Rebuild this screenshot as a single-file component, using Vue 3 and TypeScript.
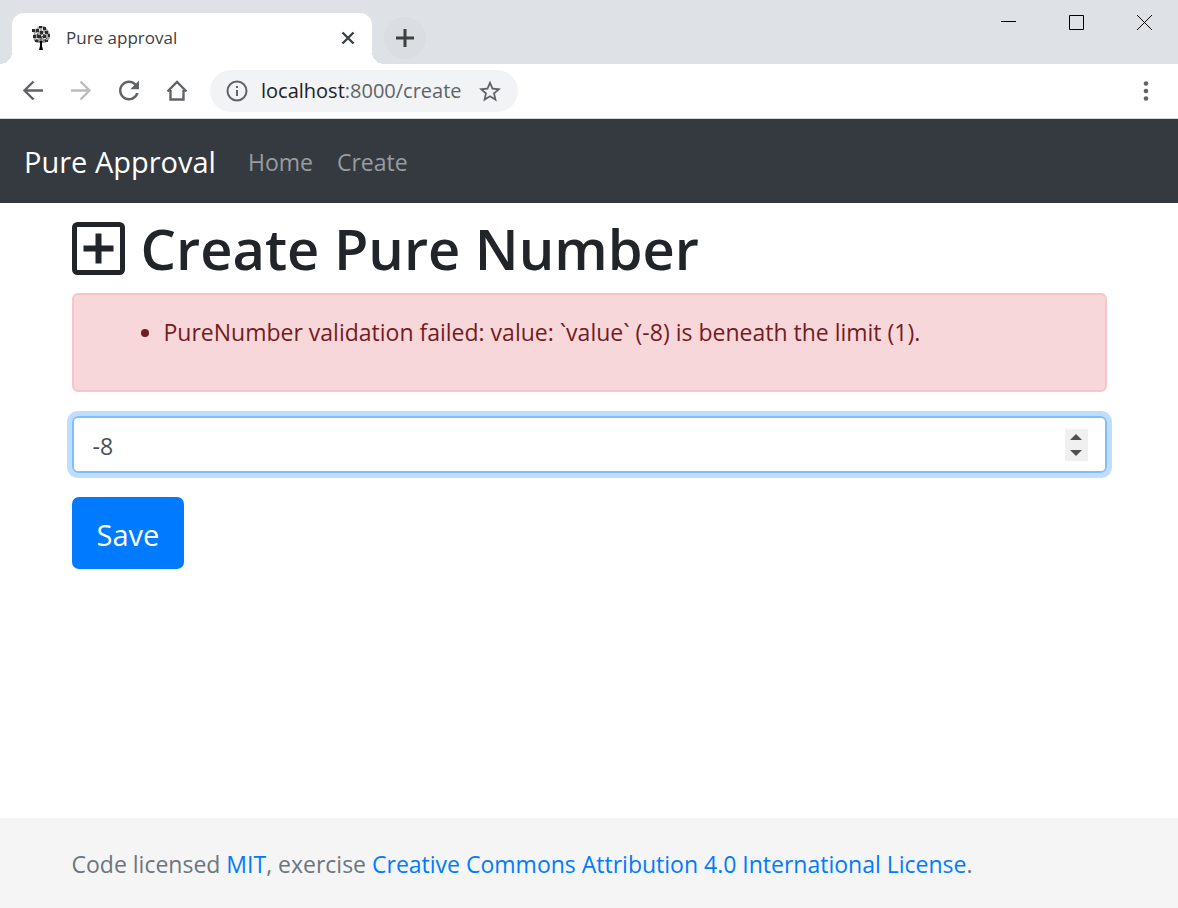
<script setup lang="ts">
import { ref } from 'vue'

interface NavLink {
  label: string
  href: string
}

const navLinks: NavLink[] = [
  { label: 'Home', href: '#home' },
  { label: 'Create', href: '#create' },
]

const errors = ref<string[]>([
  'PureNumber validation failed: value: `value` (-8) is beneath the limit (1).',
])

const amount = ref<number>(-8)
</script>

<template>
  <div class="window">
    <div class="titlebar">
      <div class="tab">
        <svg class="favicon" viewBox="0 0 20 26" aria-hidden="true">
          <path class="leaf-light" d="M8 1h5l2 2 2 2 2 4v4l-2 3-3 2H6l-3-2-1-4 1-3-1-4 3-1z" />
          <path class="limb" d="M10 25V9M10 18l-5-4M10 18l6-5M10 13L6 9M10 13l4-5" />
          <path
            class="leaf"
            d="M8 1h3v2H8zM12 2h3v3h-3zM1 4h3v3H1zM5 4h3v3H5zM9 6h3v3H9zM14 6h3v3h-3zM2 10h3v3H2zM6 10h4v3H6zM12 10h3v3h-3zM17 9h2v3h-2zM4 15h3v2H4zM14 15h3v2h-3z"
          />
          <path class="gap" d="M11 3h1v3h-1zM8 4h1v2H8zM4 8h2v1H4zM12 8h2v1h-2zM10 10h2v1h-2zM5 13h2v1H5zM13 13h2v1h-2z" />
          <path class="trunk" d="M9 16h2v5l1 4H8l1-4z" />
        </svg>
        <span class="tab-title">Pure approval</span>
        <button class="icon-button tab-close" aria-label="Close tab">
          <svg width="14" height="14" viewBox="0 0 14 14"><path d="M1.5 1.5l11 11M12.5 1.5l-11 11" /></svg>
        </button>
      </div>
      <button class="icon-button new-tab" aria-label="New tab">
        <svg width="18" height="18" viewBox="0 0 18 18"><path d="M9 0v18M0 9h18" /></svg>
      </button>
      <div class="window-controls">
        <button class="icon-button" aria-label="Minimize">
          <svg width="15" height="15" viewBox="0 0 15 15"><path d="M0 6.5h15" /></svg>
        </button>
        <button class="icon-button" aria-label="Maximize">
          <svg width="15" height="15" viewBox="0 0 15 15"><path d="M.5.5h14v14H.5z" /></svg>
        </button>
        <button class="icon-button" aria-label="Close window">
          <svg width="15" height="15" viewBox="0 0 15 15"><path d="M0 0l15 15M15 0L0 15" /></svg>
        </button>
      </div>
    </div>

    <div class="toolbar">
      <button class="icon-button" aria-label="Back">
        <svg width="24" height="24" viewBox="0 0 24 24"><path d="M22 11.500H4M12.500 2.500l-9 9 9 9" /></svg>
      </button>
      <button class="icon-button" aria-label="Forward" disabled>
        <svg width="24" height="24" viewBox="0 0 24 24"><path d="M2 11.500h18M11.500 2.500l9 9-9 9" /></svg>
      </button>
      <button class="icon-button" aria-label="Reload">
        <svg width="24" height="24" viewBox="2.400 2.800 19.200 19.200">
          <path
            class="solid"
            d="M17.650 6.350C16.200 4.900 14.210 4 12 4c-4.420 0-7.990 3.580-7.990 8s3.570 8 7.990 8c3.730 0 6.840-2.550 7.730-6h-2.080c-.820 2.330-3.040 4-5.650 4-3.310 0-6-2.690-6-6s2.690-6 6-6c1.660 0 3.140.690 4.220 1.780L13 11h7V4z"
          />
        </svg>
      </button>
      <button class="icon-button" aria-label="Home page">
        <svg width="24" height="24" viewBox="0 0 24 24"><path d="M2.500 12.500L12 3l9.500 9.500M5.500 11v9.500h13V11" /></svg>
      </button>
      <div class="address">
        <svg class="info" width="22" height="22" viewBox="0 0 22 22" aria-hidden="true">
          <circle cx="11" cy="11" r="9.500" />
          <path d="M11 10v6M11 6v2" />
        </svg>
        <span class="url"><span class="host">localhost</span>:8000/create</span>
        <button class="icon-button star" aria-label="Bookmark this page">
          <svg width="22" height="22" viewBox="2 1.500 20 20">
            <path
              class="solid"
              d="M22 9.240l-7.190-.620L12 2 9.190 8.630 2 9.240l5.460 4.730L5.820 21 12 17.270 18.180 21l-1.630-7.030zM12 15.400l-3.760 2.270 1-4.280-3.320-2.880 4.380-.380L12 6.100l1.710 4.040 4.380.380-3.320 2.880 1 4.280z"
            />
          </svg>
        </button>
      </div>
      <button class="icon-button menu" aria-label="Browser menu">
        <svg width="6" height="20" viewBox="0 0 6 20">
          <circle cx="3" cy="2.500" r="2.300" />
          <circle cx="3" cy="10" r="2.300" />
          <circle cx="3" cy="17.500" r="2.300" />
        </svg>
      </button>
    </div>

    <nav class="navbar">
      <a class="brand" href="#top">Pure Approval</a>
      <a v-for="link in navLinks" :key="link.label" class="nav-link" :href="link.href">{{ link.label }}</a>
    </nav>

    <main class="container">
      <h1>
        <svg class="plus-square" width="53" height="53" viewBox="0 0 53 53" aria-hidden="true">
          <rect x="2.500" y="2.500" width="48" height="48" rx="3" />
          <path d="M26.500 11.500v30M11.500 26.500h30" />
        </svg>
        <span>Create Pure Number</span>
      </h1>
      <div class="alert" role="alert">
        <ul>
          <li v-for="message in errors" :key="message">{{ message }}</li>
        </ul>
      </div>
      <form @submit.prevent>
        <div class="number-field">
          <input v-model.number="amount" type="number" aria-label="Pure number" />
          <div class="spinner">
            <button type="button" aria-label="Increase" @click="amount++">
              <svg width="12" height="6" viewBox="0 0 12 6"><path d="M0 6l6-6 6 6z" /></svg>
            </button>
            <button type="button" aria-label="Decrease" @click="amount--">
              <svg width="12" height="6" viewBox="0 0 12 6"><path d="M0 0l6 6 6-6z" /></svg>
            </button>
          </div>
        </div>
        <button class="save" type="submit">Save</button>
      </form>
    </main>

    <footer class="footer">
      <div class="container">
        Code licensed <a href="#mit">MIT</a>, exercise
        <a href="#cc">Creative Commons Attribution 4.0 International License</a>.
      </div>
    </footer>
  </div>
</template>

<style>
body {
  margin: 0;
}
</style>

<style scoped>
.window {
  display: flex;
  flex-direction: column;
  min-height: 100vh;
  background: #fff;
  color: #212529;
  font-family: "Open Sans", "Noto Sans", sans-serif;
  font-size: 23px;
  line-height: 36px;
}

.window * {
  box-sizing: border-box;
}

a {
  color: #007bff;
  text-decoration: none;
}

.icon-button {
  display: flex;
  align-items: center;
  justify-content: center;
  padding: 0;
  border: 0;
  background: none;
}

svg {
  display: block;
  flex: none;
  fill: none;
}

.titlebar {
  display: flex;
  height: 64px;
  padding-left: 12px;
  background: #dee1e6;
}

.tab {
  position: relative;
  display: flex;
  align-items: center;
  width: 360px;
  height: 51px;
  margin-top: 13px;
  padding: 0 17px 2px 19px;
  border-radius: 12px 12px 0 0;
  background: #fff;
}

.tab::before,
.tab::after {
  content: "";
  position: absolute;
  bottom: 0;
  width: 12px;
  height: 12px;
}

.tab::before {
  right: 100%;
  background: radial-gradient(circle at 0 0, #dee1e6 12px, #fff 12px);
}

.tab::after {
  left: 100%;
  background: radial-gradient(circle at 100% 0, #dee1e6 12px, #fff 12px);
}

.favicon {
  width: 20px;
  height: 26px;
}

.limb {
  stroke: #444;
}

.leaf-light {
  fill: #a4a4a4;
}

.leaf {
  fill: #2b2b2b;
}

.gap {
  fill: #e4e4e4;
}

.trunk {
  fill: #000;
}

.tab-title {
  flex: 1;
  margin-left: 15px;
  color: #3c4043;
  font-size: 17px;
}

.tab-close svg {
  stroke: #3c4043;
  stroke-width: 2.4;
}

.new-tab {
  width: 42px;
  height: 42px;
  margin: 17px 0 0 12px;
  border-radius: 50%;
  background: #dadde1;
}

.new-tab svg {
  stroke: #3c4043;
  stroke-width: 3;
}

.window-controls {
  display: flex;
  height: 45px;
  margin-left: auto;
}

.window-controls .icon-button {
  width: 68px;
}

.window-controls svg {
  stroke: #000;
}

.toolbar {
  display: flex;
  align-items: center;
  gap: 24px;
  height: 55px;
  padding: 0 29px 0 21px;
  border-bottom: 1px solid #d5d8dc;
}

.toolbar > .icon-button svg {
  stroke: #5f6368;
  stroke-width: 2.4;
}

.toolbar > .icon-button:disabled svg {
  stroke: #babcbe;
}

.toolbar svg .solid {
  fill: #5f6368;
  stroke: none;
}

.address {
  display: flex;
  align-items: center;
  height: 42px;
  margin-left: -3px;
  padding: 0 17px 0 16px;
  border-radius: 21px;
  background: #f1f3f4;
}

.address svg {
  stroke: #5f6368;
  stroke-width: 2;
}

.url {
  margin: 0 17px 0 13px;
  color: #5f6368;
  font-size: 20px;
}

.host {
  color: #202124;
}

.toolbar > .menu {
  margin-left: auto;
}

.toolbar > .menu svg {
  fill: #5f6368;
  stroke: none;
}

.navbar {
  display: flex;
  align-items: center;
  gap: 24px;
  height: 84px;
  padding: 2px 24px 0;
  background: #343a40;
}

.brand {
  margin-right: 8px;
  color: #fff;
  font-size: 29px;
}

.nav-link {
  color: #999c9f;
}

.container {
  width: 100%;
  max-width: 1107px;
  margin: 0 auto;
  padding: 0 36px;
}

main {
  flex: 1;
}

h1 {
  display: flex;
  align-items: center;
  gap: 16px;
  margin: 9px 0;
  font-size: 56px;
  font-weight: 600;
  line-height: 72px;
}

.plus-square {
  stroke: #212529;
  stroke-width: 5;
}

.plus-square path {
  stroke-width: 6;
}

.alert {
  padding: 19px 30px 18px;
  border: 2px solid #f5c6cb;
  border-radius: 6px;
  background: #f8d7da;
  color: #721c24;
}

.alert ul {
  margin: 0 0 22px;
  padding-left: 60px;
}

.number-field {
  display: flex;
  align-items: center;
  height: 57px;
  margin: 24px 0;
  padding: 0 17px 0 19px;
  border: 2px solid #80bdff;
  border-radius: 6px;
  box-shadow: 0 0 0 5px #bfdeff;
}

.number-field input {
  flex: 1;
  min-width: 0;
  height: 100%;
  padding: 2px 0 0;
  border: 0;
  outline: 0;
  background: none;
  color: #495057;
  font: inherit;
  appearance: textfield;
}

.spinner {
  display: flex;
  flex-direction: column;
  width: 23px;
  height: 32px;
  background: #f0f0f0;
}

.spinner button {
  display: flex;
  flex: 1;
  align-items: center;
  justify-content: center;
  padding: 0;
  border: 0;
  background: none;
}

.spinner svg {
  fill: #505050;
}

.save {
  display: block;
  height: 72px;
  padding: 2px 25px 0;
  border: 0;
  border-radius: 7px;
  background: #007bff;
  color: #fff;
  font-family: inherit;
  font-size: 29px;
}

.footer {
  padding: 28px 0 26px;
  background: #f5f5f5;
  color: #6c757d;
}
</style>
